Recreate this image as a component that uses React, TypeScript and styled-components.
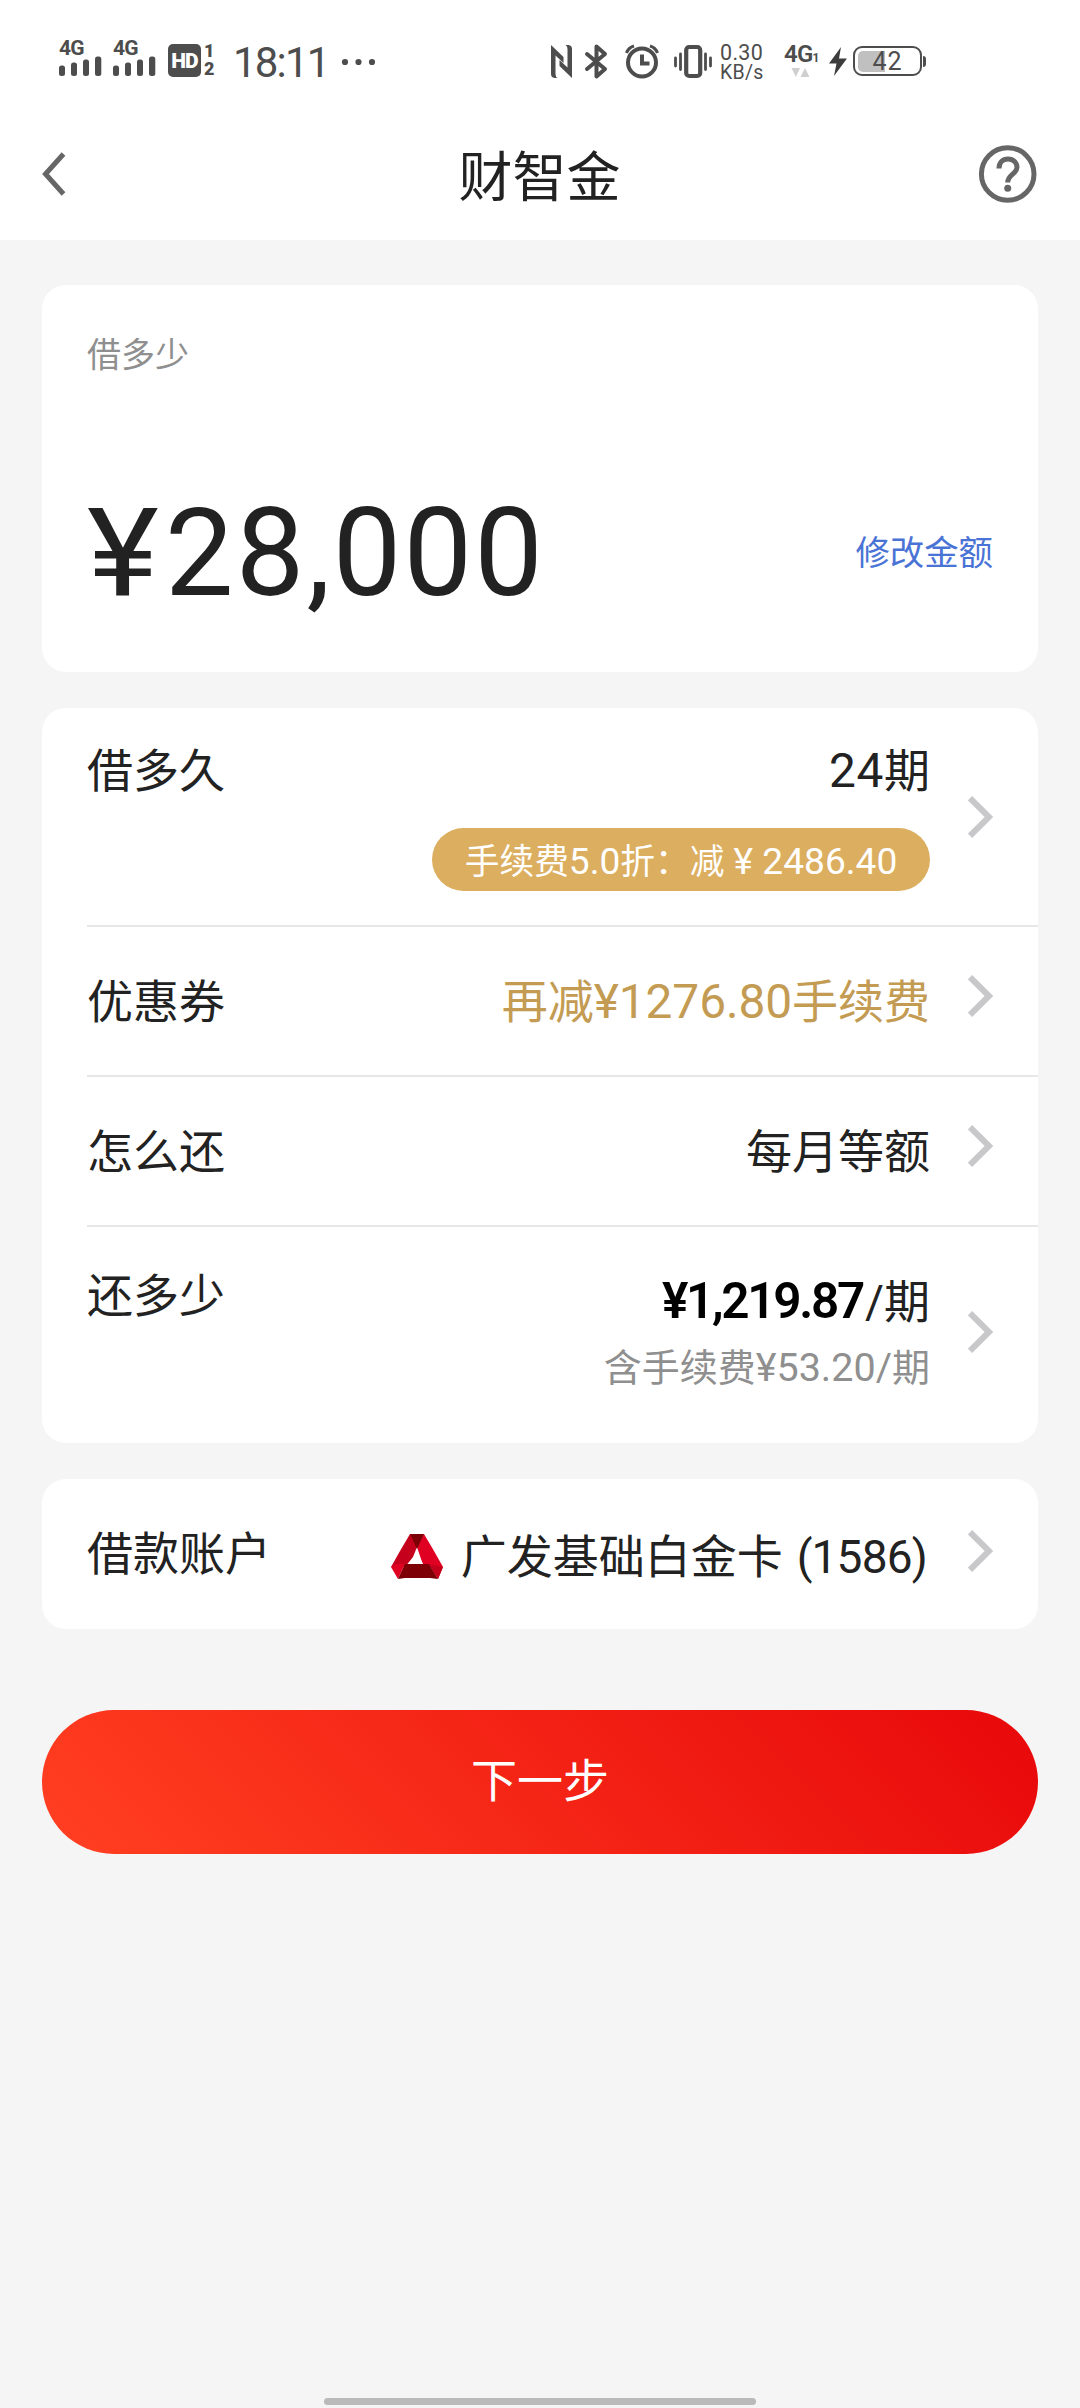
import React from "react";
import styled, { createGlobalStyle } from "styled-components";

const GlobalStyle = createGlobalStyle`
  * { box-sizing: border-box; }
  body {
    margin: 0;
    background: #f5f5f5;
    font-family: Roboto, "Noto Sans CJK SC", sans-serif;
    color: #222;
  }
`;

const Screen = styled.div`
  width: 1080px;
  height: 2408px;
  display: flex;
  flex-direction: column;
  background: #f5f5f5;
  overflow: hidden;
`;

const StatusBar = styled.header`
  height: 100px;
  padding-top: 40px;
  display: flex;
  align-items: flex-start;
  background: #fff;
  color: #4d4d4d;
`;

const StatusItem = styled.div<{ $gap: number; $width: number; $top?: number }>`
  flex: none;
  margin-left: ${(p) => p.$gap}px;
  margin-top: ${(p) => p.$top ?? 0}px;
  width: ${(p) => p.$width}px;
  display: flex;
  flex-direction: column;
  svg { display: block; overflow: visible; }
`;

const StatusText = styled.span<{ $size: number; $line: number; $weight?: number; $spacing?: number }>`
  font-size: ${(p) => p.$size}px;
  line-height: ${(p) => p.$line}px;
  font-weight: ${(p) => p.$weight ?? 400};
  letter-spacing: ${(p) => p.$spacing ?? 0}px;
  white-space: pre;
`;

const SpeedUnit = styled.span`
  font-size: 19.5px;
`;

const HdBadge = styled.div`
  width: 33px;
  height: 33px;
  border-radius: 5px;
  background: #4d4d4d;
  color: #fff;
  font-size: 21px;
  font-weight: 900;
  line-height: 34px;
  text-align: center;
  letter-spacing: -1px;
`;

const NetworkLabel = styled.div`
  display: flex;
  align-items: baseline;
  margin-bottom: 4px;
`;

const Battery = styled.div`
  display: flex;
  align-items: center;
`;

const BatteryBody = styled.div`
  width: 69px;
  height: 30px;
  border: 2px solid #4d4d4d;
  border-radius: 9px;
  padding: 3px;
  display: grid;
`;

const BatteryLevel = styled.div`
  grid-area: 1 / 1;
  width: 27px;
  border-radius: 5px 0 0 5px;
  background: #c0c0c0;
`;

const BatteryText = styled.span`
  grid-area: 1 / 1;
  text-align: center;
  font-size: 25px;
  line-height: 21px;
  letter-spacing: 1px;
`;

const BatteryNub = styled.div`
  width: 3px;
  height: 11px;
  margin-left: 1px;
  border-radius: 0 3px 3px 0;
  background: #4d4d4d;
`;

const NavBar = styled.nav`
  height: 140px;
  padding: 4px 43px 0 42px;
  display: grid;
  grid-template-columns: 58px 1fr 58px;
  align-items: start;
  background: #fff;
`;

const NavButton = styled.button`
  border: 0;
  padding: 0;
  height: 58px;
  margin-top: 41px;
  background: none;
  display: flex;
  align-items: center;
  svg { display: block; overflow: visible; }
`;

const Title = styled.h1`
  margin: 47px 0 0;
  text-align: center;
  font-size: 54px;
  line-height: 56px;
  font-weight: 400;
`;

const Content = styled.main`
  flex: 1;
  padding: 45px 42px 0;
  display: flex;
  flex-direction: column;
`;

const Card = styled.section`
  background: #fff;
  border-radius: 24px;
  margin-bottom: 36px;
`;

const AmountCard = styled(Card)`
  height: 387px;
  padding: 49px 45px 0;
`;

const Caption = styled.div`
  font-size: 34px;
  line-height: 42px;
  color: #8f8f8f;
`;

const AmountRow = styled.div`
  display: flex;
  justify-content: space-between;
  align-items: center;
  margin-top: 107px;
  height: 140px;
`;

const Amount = styled.div`
  display: flex;
  padding-top: 2px;
  font-size: 122px;
  line-height: 140px;
  letter-spacing: 2.2px;
`;

const Currency = styled.span`
  width: 78px;
  letter-spacing: 0;
  transform: scaleX(1.12);
  transform-origin: left;
`;

const EditLink = styled.a`
  font-size: 34.4px;
  line-height: 42px;
  color: #4a73d6;
`;

const Row = styled.div<{ $height: number; $divider?: boolean }>`
  height: ${(p) => p.$height}px;
  margin-left: 45px;
  padding-right: 45px;
  display: flex;
  border-bottom: ${(p) => (p.$divider ? "2px solid #e7e7e7" : "0")};
`;

const Label = styled.span<{ $top: number }>`
  padding-top: ${(p) => p.$top}px;
  font-size: 46px;
  line-height: 46px;
  white-space: nowrap;
`;

const Values = styled.div<{ $top: number }>`
  flex: 1;
  padding: ${(p) => p.$top}px 38px 0 0;
  display: flex;
  flex-direction: column;
  align-items: flex-end;
`;

const Value = styled.div<{ $color?: string }>`
  display: flex;
  align-items: baseline;
  height: 46px;
  font-size: 46px;
  line-height: 46px;
  color: ${(p) => p.$color ?? "#222"};
  white-space: pre;
`;

const Digits = styled.span<{ $scale?: number; $spacing?: number }>`
  font-size: ${(p) => p.$scale ?? 1.04}em;
  letter-spacing: ${(p) => p.$spacing ?? 0}px;
`;

const CardTail = styled.span`
  margin: 0 3px 0 14px;
  letter-spacing: -0.8px;
`;

const Installment = styled.b`
  font-size: 49.5px;
  line-height: 44px;
  font-weight: 600;
  color: #000;
  letter-spacing: -2.3px;
  margin-right: 2px;
`;

const SubValue = styled.div`
  margin-top: 20px;
  height: 46px;
  font-size: 38px;
  line-height: 46px;
  color: #8f8f8f;
`;

const Pill = styled.div`
  margin-top: 34px;
  width: 498px;
  height: 63px;
  border-radius: 32px;
  background: #dcae5f;
  color: #fff;
  font-size: 34.7px;
  line-height: 67px;
  text-align: center;
  white-space: pre;
`;

const ArrowBox = styled.div<{ $lift: number }>`
  align-self: center;
  margin-bottom: ${(p) => p.$lift}px;
  svg { display: block; }
`;

const LogoBox = styled.span`
  align-self: center;
  margin-right: 18px;
  svg { display: block; }
`;

const NextButton = styled.button`
  margin-top: 45px;
  height: 144px;
  border: 0;
  padding: 0 0 2px;
  border-radius: 72px;
  background: linear-gradient(45deg, #ff3d20 5%, #e90a0b 95%);
  color: #fff;
  font-family: inherit;
  font-size: 46px;
  line-height: 46px;
`;

const HomeBar = styled.div`
  align-self: center;
  width: 432px;
  height: 7px;
  margin-bottom: 3px;
  border-radius: 4px;
  background: #bababa;
`;

const Signal = ({ gap }: { gap: number }) => (
  <StatusItem $gap={gap} $width={43}>
    <StatusText $size={21} $line={17} $weight={700} $spacing={-0.8}>4G</StatusText>
    <svg width="43" height="20" viewBox="0 0 43 20" fill="#4d4d4d">
      <rect x="0" y="8.500" width="6" height="10.500" rx="2.500" />
      <rect x="12" y="5.500" width="6" height="13.500" rx="2.500" />
      <rect x="24" y="2.500" width="6" height="16.500" rx="2.500" />
      <rect x="36" y="-.5" width="6.300" height="19.500" rx="2.500" />
    </svg>
  </StatusItem>
);

const Arrow = ({ lift = 0 }: { lift?: number }) => (
  <ArrowBox $lift={lift}>
    <svg width="25" height="42" viewBox="0 0 25 42" fill="none" stroke="#c8c8ca" strokeWidth="6">
      <path d="M2 2.2L21 21L2 39.8" />
    </svg>
  </ArrowBox>
);

const BankLogo = () => (
  <svg width="52" height="46" viewBox="0 0 52 46">
    <path d="M19 0h14l-7 13-4 10-8 10H5L0 33 9 17z" fill="#c4001c" />
    <path d="M26 13L33 0l10 17 9 16-5 12-8-13-7-1z" fill="#e00021" />
    <path d="M0 33l5-3h9l-7 15z" fill="#e00021" />
    <path d="M14 30h24l9 15-8-1H14l-7 1z" fill="#7d0006" />
    <path d="M38 30l14 3-5 12z" fill="#c4001c" />
    <path d="M19 0h14l-7 15z" fill="#7d0006" />
    <path d="M26 18l6 12H20z" fill="#fff" />
  </svg>
);

export default function App() {
  return (
    <Screen>
      <GlobalStyle />
      <StatusBar>
        <Signal gap={59} />
        <Signal gap={11} />
        <StatusItem $gap={12} $width={33} $top={4}>
          <HdBadge>HD</HdBadge>
        </StatusItem>
        <StatusItem $gap={3} $width={12} $top={2}>
          <StatusText $size={18} $line={18} $weight={900}>{"1\n2"}</StatusText>
        </StatusItem>
        <StatusItem $gap={17} $width={96} $top={3}>
          <StatusText $size={42} $line={40} $spacing={-1.8}>18:11</StatusText>
        </StatusItem>
        <StatusItem $gap={13} $width={34} $top={19}>
          <svg width="34" height="6" viewBox="0 0 34 6" fill="#4d4d4d">
            <circle cx="3" cy="3" r="3.100" />
            <circle cx="16.500" cy="3" r="3.100" />
            <circle cx="30" cy="3" r="3.100" />
          </svg>
        </StatusItem>
        <StatusItem $gap={175} $width={21} $top={5}>
          <svg width="21" height="33" viewBox="0 0 21 33" fill="#4d4d4d">
            <path d="M0 0L12.5 12V18L4.5 10.5V29Q4.5 32 6.5 33H3.5Q0 32.500 0 29Z" />
            <path d="M21 33L8.500 21V15L16.500 22.500V4Q16.500 1 14.500 0H17.500Q21 .5 21 4Z" />
          </svg>
        </StatusItem>
        <StatusItem $gap={13} $width={22} $top={4}>
          <svg width="22" height="35" viewBox="0 0 22 35" fill="none" stroke="#4d4d4d" strokeWidth="4" strokeLinecap="round" strokeLinejoin="round">
            <path d="M2 10L20 25L11.500 32.500V2.500L20 10L2 25" />
          </svg>
        </StatusItem>
        <StatusItem $gap={18} $width={34} $top={4}>
          <svg width="34" height="35" viewBox="0 0 34 35" fill="none" stroke="#4d4d4d" strokeWidth="4">
            <circle cx="17" cy="18.500" r="14" />
            <path d="M17 10.500V19.500H24.500" />
            <path d="M1.500 9Q3.500 3.500 9 2M32.500 9Q30.500 3.500 25 2" strokeWidth="3" />
          </svg>
        </StatusItem>
        <StatusItem $gap={15} $width={38} $top={4}>
          <svg width="38" height="35" viewBox="0 0 38 35" fill="none" stroke="#4d4d4d" strokeLinecap="round">
            <rect x="12.200" y="3" width="14" height="29" rx="3" strokeWidth="4.200" />
            <path d="M1.500 14V22M36.500 14V22M6.500 10V25.500M31.500 10V25.500" strokeWidth="2.800" />
          </svg>
        </StatusItem>
        <StatusItem $gap={8} $width={45} $top={3}>
          <StatusText $size={21.5} $line={19} $spacing={0.3}>
            {"0.30\n"}
            <SpeedUnit>KB/s</SpeedUnit>
          </StatusText>
        </StatusItem>
        <StatusItem $gap={19} $width={36} $top={5}>
          <NetworkLabel>
            <StatusText $size={24} $line={19} $weight={600} $spacing={-0.8}>4G</StatusText>
            <StatusText $size={12} $line={12} $weight={700}>1</StatusText>
          </NetworkLabel>
          <svg width="26" height="9" viewBox="0 0 26 9" fill="#cfcfcf">
            <path d="M7.500 0H16L11.800 9ZM16.500 9L21 0L25.500 9Z" />
          </svg>
        </StatusItem>
        <StatusItem $gap={9} $width={18} $top={7}>
          <svg width="18" height="29" viewBox="0 0 18 29" fill="#3d3d3d">
            <path d="M12 0L0 16.500H7.500L5 29L18 11.500H10Z" />
          </svg>
        </StatusItem>
        <StatusItem $gap={6} $width={74} $top={6}>
          <Battery>
            <BatteryBody>
              <BatteryLevel />
              <BatteryText>42</BatteryText>
            </BatteryBody>
            <BatteryNub />
          </Battery>
        </StatusItem>
      </StatusBar>

      <NavBar>
        <NavButton>
          <svg width="24" height="42" viewBox="0 0 24 42" fill="none" stroke="#666" strokeWidth="5">
            <path d="M21.500 1L3.500 21L21.500 41" />
          </svg>
        </NavButton>
        <Title>财智金</Title>
        <NavButton>
          <svg width="58" height="58" viewBox="0 0 58 58" fill="none" stroke="#666" strokeWidth="5">
            <circle cx="28.700" cy="29" r="26.300" />
            <path d="M20 23.500C20 17.500 23.800 14 29 14C34.500 14 38 17.800 38 22.300C38 29 28.700 29.500 28.700 37.500" />
            <circle cx="28.700" cy="43.200" r="3.500" fill="#666" stroke="none" />
          </svg>
        </NavButton>
      </NavBar>

      <Content>
        <AmountCard>
          <Caption>借多少</Caption>
          <AmountRow>
            <Amount>
              <Currency>¥</Currency>28,000
            </Amount>
            <EditLink>修改金额</EditLink>
          </AmountRow>
        </AmountCard>

        <Card>
          <Row $height={219} $divider>
            <Label $top={40}>借多久</Label>
            <Values $top={40}>
              <Value><Digits $spacing={0.6}>24</Digits>期</Value>
              <Pill>
                手续费<Digits $scale={1.07}>5.0</Digits>折：减
                <Digits $scale={1.07}>{" ¥ 2486.40"}</Digits>
              </Pill>
            </Values>
            <Arrow />
          </Row>
          <Row $height={150} $divider>
            <Label $top={52}>优惠券</Label>
            <Values $top={52}>
              <Value $color="#c39b52">再减<Digits $spacing={-0.1}>¥1276.80</Digits>手续费</Value>
            </Values>
            <Arrow lift={10} />
          </Row>
          <Row $height={150} $divider>
            <Label $top={52}>怎么还</Label>
            <Values $top={52}>
              <Value>每月等额</Value>
            </Values>
            <Arrow lift={10} />
          </Row>
          <Row $height={216}>
            <Label $top={46}>还多少</Label>
            <Values $top={52}>
              <Value><Installment>¥1,219.87</Installment>/期</Value>
              <SubValue>含手续费<Digits>¥53.20/</Digits>期</SubValue>
            </Values>
            <Arrow lift={6} />
          </Row>
        </Card>

        <Card>
          <Row $height={150}>
            <Label $top={52}>借款账户</Label>
            <Values $top={55}>
              <Value>
                <LogoBox><BankLogo /></LogoBox>
                广发基础白金卡<CardTail>(1586)</CardTail>
              </Value>
            </Values>
            <Arrow lift={6} />
          </Row>
        </Card>

        <NextButton>下一步</NextButton>
      </Content>
      <HomeBar />
    </Screen>
  );
}
